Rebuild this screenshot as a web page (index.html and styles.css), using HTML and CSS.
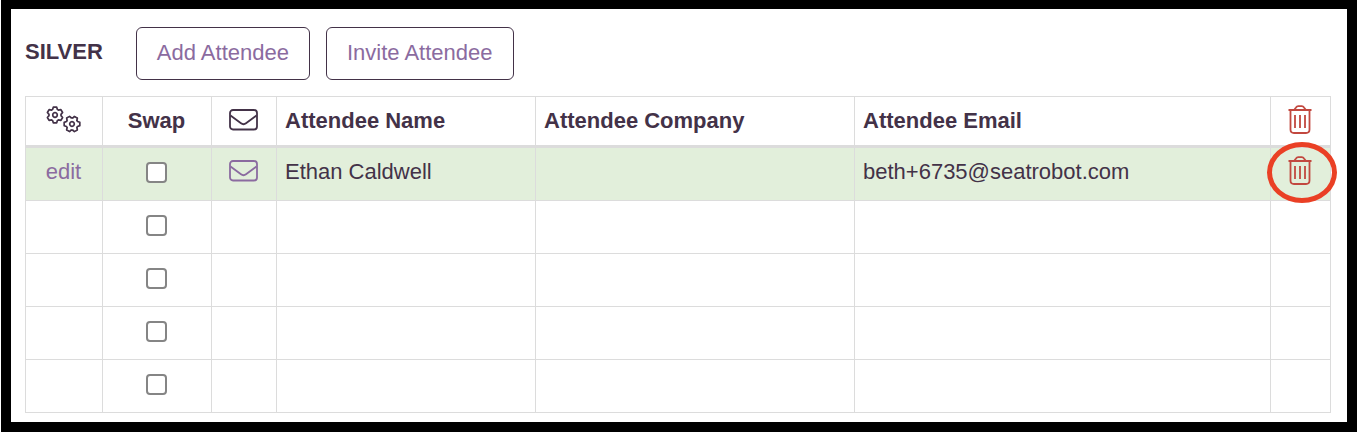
FILE: index.html
```
<!DOCTYPE html>
<html lang="en">
<head>
  <meta charset="UTF-8">
  <meta name="viewport" content="width=device-width, initial-scale=1.0">
  <title>Attendees</title>
  <link rel="stylesheet" href="styles.css">
</head>
<body>

  <svg class="sprite" aria-hidden="true">
    <symbol id="gear" viewBox="-9 -9 18 18">
      <path d="M-2.4-5.5L-1.7-7.8H1.7L2.4-5.5Q3-5.3 3.5-4.9L5.9-5.4L7.6-2.5L6-.6V.6L7.6 2.5L5.9 5.4L3.5 4.9Q3 5.3 2.4 5.5L1.7 7.8H-1.7L-2.4 5.5Q-3 5.3-3.5 4.9L-5.9 5.4L-7.6 2.5L-6 .6V-.6L-7.6-2.5L-5.9-5.4L-3.5-4.9Q-3-5.3-2.4-5.5Z"/>
      <circle r="2.3"/>
    </symbol>
    <symbol id="envelope" viewBox="0 0 29 22">
      <rect x="1" y="1" width="27" height="19.5" rx="3"/>
      <path d="M1.5 6.5L12 14.3Q14.5 16.2 17 14.3L27.5 6.5"/>
    </symbol>
    <symbol id="trash" viewBox="0 0 24 29">
      <path d="M.5 5H23.5M6.5 4.5L8 2.4Q8.8 1.2 10.2 1.2H13.8Q15.2 1.2 16 2.4L17.5 4.5M2.5 5V24.5Q2.5 28 6 28H18Q21.5 28 21.5 24.5V5M7 10V23M12 10V23M17 10V23"/>
    </symbol>
  </svg>

  <main class="panel">
    <div class="toolbar">
      <h2>SILVER</h2>
      <button type="button">Add Attendee</button>
      <button type="button">Invite Attendee</button>
    </div>

    <table class="attendees">
      <colgroup>
        <col class="col-edit">
        <col class="col-swap">
        <col class="col-mail">
        <col class="col-name">
        <col class="col-company">
        <col class="col-email">
        <col class="col-delete">
      </colgroup>
      <thead>
        <tr>
          <th class="center" aria-label="Actions">
            <svg class="gears" viewBox="0 0 36 28">
              <use href="#gear" x="0" y="0" width="18" height="18"/>
              <use href="#gear" x="17" y="9" width="18" height="18" transform="rotate(30 26 18)"/>
            </svg>
          </th>
          <th class="center">Swap</th>
          <th class="center" aria-label="Mail"><svg class="envelope"><use href="#envelope"/></svg></th>
          <th>Attendee Name</th>
          <th>Attendee Company</th>
          <th>Attendee Email</th>
          <th class="center" aria-label="Delete"><svg class="trash"><use href="#trash"/></svg></th>
        </tr>
      </thead>
      <tbody>
        <tr class="filled">
          <td class="center"><a href="#">edit</a></td>
          <td class="center"><input type="checkbox" aria-label="Swap Ethan Caldwell"></td>
          <td class="center"><a href="#" aria-label="Send email"><svg class="envelope"><use href="#envelope"/></svg></a></td>
          <td>Ethan Caldwell</td>
          <td></td>
          <td>beth+6735@seatrobot.com</td>
          <td class="center marked"><a href="#" aria-label="Delete attendee"><svg class="trash"><use href="#trash"/></svg></a></td>
        </tr>
        <tr>
          <td></td>
          <td class="center"><input type="checkbox" aria-label="Swap seat 2"></td>
          <td></td><td></td><td></td><td></td><td></td>
        </tr>
        <tr>
          <td></td>
          <td class="center"><input type="checkbox" aria-label="Swap seat 3"></td>
          <td></td><td></td><td></td><td></td><td></td>
        </tr>
        <tr>
          <td></td>
          <td class="center"><input type="checkbox" aria-label="Swap seat 4"></td>
          <td></td><td></td><td></td><td></td><td></td>
        </tr>
        <tr>
          <td></td>
          <td class="center"><input type="checkbox" aria-label="Swap seat 5"></td>
          <td></td><td></td><td></td><td></td><td></td>
        </tr>
      </tbody>
    </table>
  </main>

</body>
</html>
```
FILE: styles.css
```
*,
*::after {
  box-sizing: border-box;
}
body {
  margin: 0;
  background: #fff;
  color: #433248;
  font-family: "Liberation Sans", Arial, sans-serif;
  font-size: 22px;
  line-height: 28px;
}
.sprite {
  position: absolute;
  width: 0;
  height: 0;
}
.panel {
  margin: 0 1px;
  padding: 18px 16px 9px 14px;
  border: 10px solid #000;
  border-top-width: 9px;
}
.toolbar {
  display: flex;
  align-items: center;
  gap: 16px;
  margin-bottom: 16px;
}
.toolbar h2 {
  margin: 0 17px 4px 0;
  font-size: 22px;
}
.toolbar button {
  height: 53px;
  padding: 0 20px 2px;
  border: 1px solid #433248;
  border-radius: 6px;
  background: #fff;
  color: #8b6ba0;
  font: inherit;
  cursor: pointer;
}
a {
  color: #8b6ba0;
  text-decoration: none;
}
.attendees {
  width: 100%;
  table-layout: fixed;
  border-collapse: collapse;
}
.col-edit {
  width: 77px;
}
.col-swap {
  width: 109px;
}
.col-mail {
  width: 65px;
}
.col-name {
  width: 259px;
}
.col-company {
  width: 319px;
}
.col-delete {
  width: 60px;
}
.attendees th,
.attendees td {
  height: 53px;
  padding: 10px 8px 12px;
  border: 1px solid #dcdcdc;
  text-align: left;
  vertical-align: top;
}
.attendees th {
  height: 50px;
  padding-bottom: 7px;
  border-bottom: 3px solid #dcdcdc;
}
.attendees .filled td {
  height: 54px;
}
.attendees .center {
  padding-left: 0;
  padding-right: 1px;
  text-align: center;
}
.filled {
  background: #e2efdb;
}
.attendees svg {
  display: block;
  margin: 0 auto;
  fill: none;
  stroke: currentColor;
  stroke-width: 1.8;
  stroke-linejoin: round;
}
.attendees .gears {
  width: 36px;
  height: 28px;
  margin-top: -1px;
  stroke-width: 1.7;
}
.attendees .envelope {
  width: 29px;
  height: 22px;
  margin-top: 2px;
}
.attendees .trash {
  width: 24px;
  height: 29px;
  margin-top: -2px;
  color: #c2483f;
}
input[type="checkbox"] {
  display: block;
  appearance: none;
  width: 21px;
  height: 21px;
  margin: 4px auto 0;
  border: 2px solid #858585;
  border-radius: 4px;
  background: #fff;
}
input[type="checkbox"]:checked {
  background: #8b6ba0;
}
.marked {
  position: relative;
}
/* ring around the delete action */
.marked::after {
  content: "";
  position: absolute;
  top: -6px;
  left: -4px;
  width: 70px;
  height: 61px;
  border: 5px solid #ea4025;
  border-radius: 50%;
  pointer-events: none;
}
```
